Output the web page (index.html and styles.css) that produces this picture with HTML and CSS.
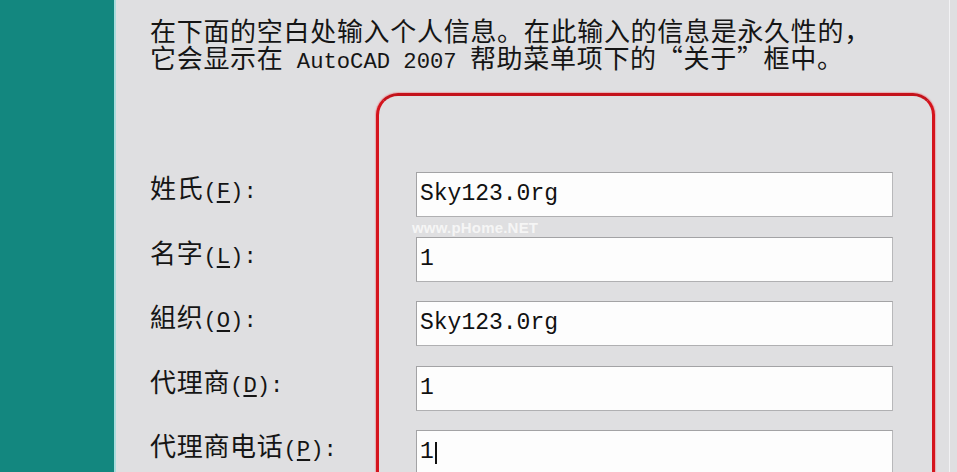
FILE: index.html
```html
<!DOCTYPE html>
<html lang="zh-CN">
<head>
<meta charset="utf-8">
<title>用户信息</title>
<link rel="stylesheet" href="styles.css">
</head>
<body>
<div class="window">
  <div class="sidebar"></div>
  <div class="main">
    <p class="intro">在下面的空白处输入个人信息。在此输入的信息是永久性的，<br>它会显示在<span class="lat"> AutoCAD 2007 </span>帮助菜单项下的<span class="q">“</span>关于<span class="q">”</span>框中。</p>
    <div class="form">
      <div class="labels">
        <div class="label">姓氏<span class="lat">(<u>F</u>):</span></div>
        <div class="label">名字<span class="lat">(<u>L</u>):</span></div>
        <div class="label">組织<span class="lat">(<u>O</u>):</span></div>
        <div class="label">代理商<span class="lat">(<u>D</u>):</span></div>
        <div class="label">代理商电话<span class="lat">(<u>P</u>):</span></div>
      </div>
      <div class="redbox">
        <div class="field">Sky123.0rg</div>
        <div class="field">1</div>
        <div class="field">Sky123.0rg</div>
        <div class="field">1</div>
        <div class="field">1<span class="caret"></span></div>
        <div class="watermark">www.pHome.NET</div>
      </div>
    </div>
  </div>
  <div class="edge"></div>
</div>
</body>
</html>
```
FILE: styles.css
```css
html, body {
  margin: 0;
  padding: 0;
}
body {
  width: 957px;
  height: 472px;
  overflow: hidden;
  background: #dfdfe1;
  font-family: "Noto Sans CJK SC", "Noto Sans", sans-serif;
  color: #151515;
}
.window {
  display: flex;
  height: 472px;
}
.sidebar {
  width: 114px;
  flex: none;
  background: #13877f;
  border-right: 2px solid #a9dcdc;
}
.main {
  flex: 1;
  padding: 16px 14px 0 34px;
  min-width: 0;
}
.edge {
  width: 7px;
  flex: none;
  border-left: 1px solid #f2f2f4;
}
.intro {
  margin: 0;
  height: 54px;
  font-size: 26px;
  letter-spacing: 0.7px;
  line-height: 27px;
  white-space: nowrap;
}
.lat {
  font-family: "Liberation Mono", monospace;
  font-size: 22.2px;
  letter-spacing: 0;
  line-height: 1;
}
.q {
  display: inline-block;
  width: 26.7px;
  line-height: 1;
  text-align: center;
}
.form {
  display: flex;
  margin-top: 23px;
}
.labels {
  width: 226px;
  flex: none;
  padding-top: 79px;
}
.label {
  height: 45px;
  margin-bottom: 19.5px;
  font-size: 26px;
  letter-spacing: 0.7px;
  line-height: 30px;
  white-space: nowrap;
}
.label u {
  text-decoration-thickness: 2px;
  text-underline-offset: 3px;
}
.redbox {
  position: relative;
  width: 559px;
  flex: none;
  height: 420px;
  border: 3px solid #d5141d;
  border-top-color: #c4121b;
  border-radius: 22px;
  padding: 76px 39px 0 37px;
  box-sizing: border-box;
  box-shadow: 0 0 1px 1px rgba(240, 120, 130, 0.5);
}
.field {
  height: 45px;
  margin-bottom: 19.5px;
  box-sizing: border-box;
  background: #fdfdfd;
  border: 1px solid #a3a3a5;
  border-right-color: #b8b8ba;
  border-bottom-color: #b0b0b2;
  padding-left: 3px;
  font-family: "Liberation Mono", monospace;
  font-size: 23px;
  line-height: 43px;
  color: #111;
  display: flex;
  align-items: center;
}
.caret {
  display: inline-block;
  width: 2px;
  height: 22px;
  background: #111;
  margin-left: 1px;
}
.watermark {
  position: absolute;
  left: 33px;
  top: 124px;
  font-family: "Liberation Sans", Arial, sans-serif;
  font-weight: bold;
  font-size: 15px;
  line-height: 15px;
  color: rgba(255, 255, 255, 0.7);
  letter-spacing: 0.2px;
}
```
